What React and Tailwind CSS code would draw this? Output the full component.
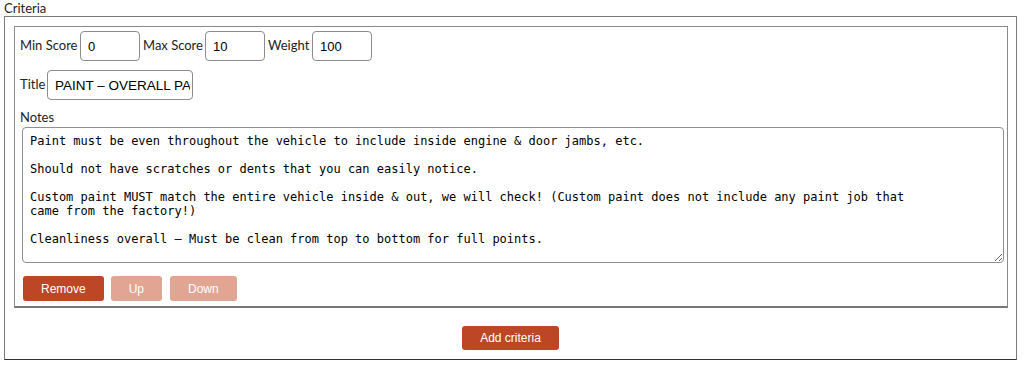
import { useState } from 'react';

const labelFont = { fontFamily: 'Lato, "Noto Sans", sans-serif' };

function NumberField({ label, value, labelWidth }) {
  return (
    <>
      <span className="text-[13px] text-[#222] whitespace-nowrap" style={{ ...labelFont, width: labelWidth }}>
        {label}
      </span>
      <input
        className="ml-[3px] mr-[3px] h-[30px] w-[60px] rounded-[4px] border border-[#8c8c8c] bg-white px-[7px] text-[13px] text-black outline-none"
        style={{ fontFamily: '"Liberation Sans", Arial, sans-serif' }}
        defaultValue={value}
      />
    </>
  );
}

const initialNotes =
  'Paint must be even throughout the vehicle to include inside engine & door jambs, etc.\n\n' +
  'Should not have scratches or dents that you can easily notice.\n\n' +
  'Custom paint MUST match the entire vehicle inside & out, we will check! (Custom paint does not include any paint job that\n' +
  'came from the factory!)\n\n' +
  'Cleanliness overall – Must be clean from top to bottom for full points.';

export default function App() {
  const [notes, setNotes] = useState(initialNotes);

  return (
    <div className="w-[1024px] h-[368px] bg-white pl-[4px] pr-[7px] pt-[1px]" style={{ fontFamily: '"Liberation Sans", Arial, sans-serif' }}>
      <div className="h-[15px] text-[13px] leading-[15px] text-[#222]" style={labelFont}>Criteria</div>

      <div className="flex flex-col items-center border border-[#7a7a7a] border-b-[#333] pb-[9px]">
        {/* criteria card */}
        <div className="mt-[9px] ml-[9px] mr-[8px] self-stretch border border-[#8a8a8a] border-b-2 border-b-[#777] px-[5px] pt-[4px] pb-[5px]">
          <div className="flex items-center">
            <NumberField label="Min Score" value="0" labelWidth={57} />
            <NumberField label="Max Score" value="10" labelWidth={59} />
            <NumberField label="Weight" value="100" labelWidth={41} />
          </div>

          <div className="mt-[9px] flex items-center">
            <span className="w-[24px] text-[13px] text-[#222]" style={labelFont}>Title</span>
            <input
              className="ml-[3px] h-[30px] w-[146px] rounded-[4px] border border-[#8c8c8c] bg-white pl-[7px] pr-[2px] text-[13.5px] text-black outline-none"
              defaultValue="PAINT – OVERALL PAINT"
            />
          </div>

          <div className="mt-[9px] h-[16px] text-[13px] leading-[16px] text-[#222]" style={labelFont}>Notes</div>

          <textarea
            className="mt-[2px] ml-[2px] block h-[136px] w-[982px] resize-y rounded-[4px] border border-[#8f8f8f] bg-white px-[7px] py-[6px] text-[12px] leading-[14px] text-black outline-none"
            style={{ fontFamily: '"DejaVu Sans Mono", "Liberation Mono", monospace' }}
            value={notes}
            onChange={(e) => setNotes(e.target.value)}
          />

          <div className="mt-[13px] ml-[3px] flex gap-[7px]">
            <button className="h-[25px] rounded-[3px] bg-[#bc4625] px-[18px] text-[12px] text-white">Remove</button>
            <button disabled className="h-[25px] rounded-[3px] bg-[#e2a594] px-[18px] text-[12px] text-white">Up</button>
            <button disabled className="ml-[1px] h-[25px] rounded-[3px] bg-[#e2a594] px-[18px] text-[12px] text-white">Down</button>
          </div>
        </div>

        <button className="mt-[18px] h-[24px] rounded-[3px] bg-[#bc4625] px-[18px] text-[12px] text-white">Add criteria</button>
      </div>
    </div>
  );
}
